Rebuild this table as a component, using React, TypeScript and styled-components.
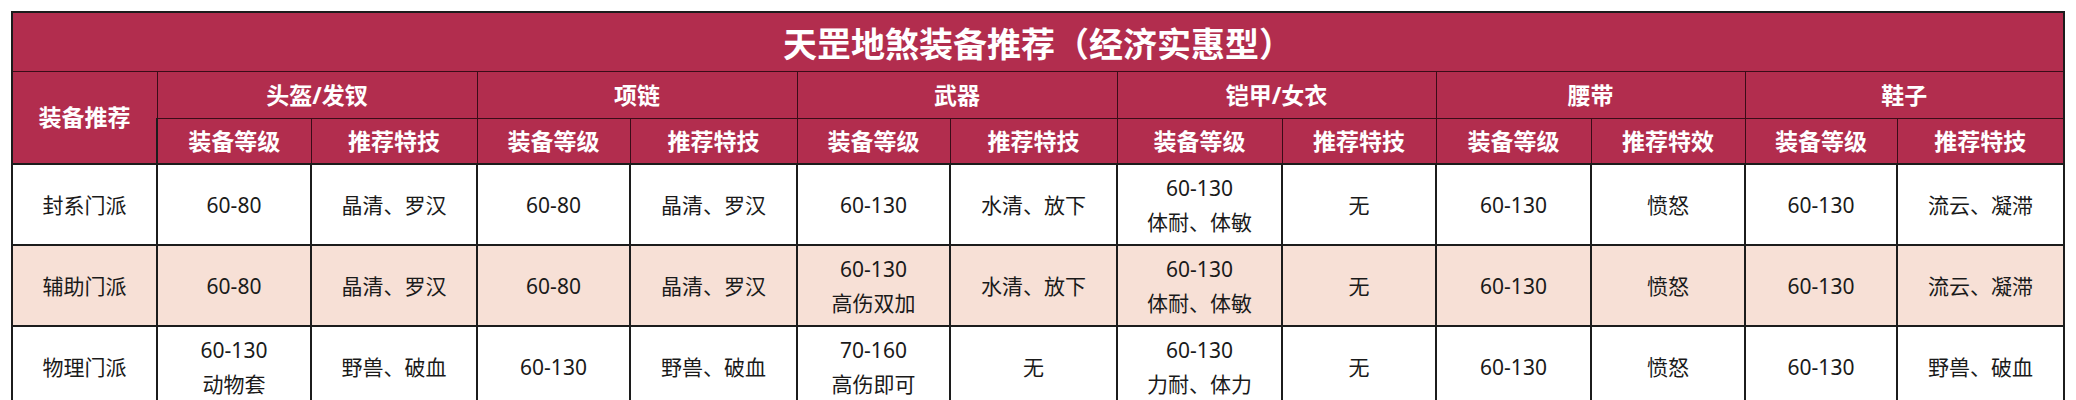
import React from "react";
import styled, { createGlobalStyle } from "styled-components";

const Global = createGlobalStyle`
  html, body {
    margin: 0;
    padding: 0;
    background: #ffffff;
  }
  body {
    font-family: "Noto Sans", "Noto Sans CJK SC", sans-serif;
  }
`;

const Page = styled.div`
  padding: 11px 0 0 11px;
`;

const Table = styled.table`
  border-collapse: collapse;
  table-layout: fixed;
  width: 2054px;
  font-family: "Noto Sans", "Noto Sans CJK SC", sans-serif;
`;

const TitleRow = styled.tr`
  height: 59px;
`;

const GroupRow = styled.tr`
  height: 47px;
`;

const SubRow = styled.tr`
  height: 46px;
`;

const BodyRow = styled.tr<{ $tint?: boolean }>`
  height: 81px;
  background: ${(p) => (p.$tint ? "#f7e0d6" : "#ffffff")};
`;

const TitleCell = styled.th`
  background: #b22d4e;
  color: #ffffff;
  font-family: "Noto Sans CJK SC", sans-serif;
  font-weight: 700;
  font-size: 34px;
  line-height: 40px;
  text-align: center;
  padding: 2px 0 0 0;
  border: 2px solid #1c1c1c;
  border-bottom: 1.5px solid #3a0c18;
  letter-spacing: 0;
`;

const HeadCell = styled.th`
  background: #b22d4e;
  color: #ffffff;
  font-family: "Noto Sans", "Noto Sans CJK SC", sans-serif;
  font-weight: 700;
  font-size: 23px;
  line-height: 30px;
  text-align: center;
  padding: 0;
  border: 1.5px solid #3a0c18;
  &:first-child {
    border-left: 2px solid #1c1c1c;
  }
  &:last-child {
    border-right: 2px solid #1c1c1c;
  }
`;

const Cell = styled.td`
  color: #1a1a1a;
  font-size: 21px;
  line-height: 34px;
  text-align: center;
  vertical-align: middle;
  padding: 0;
  border: 2px solid #1c1c1c;
  white-space: pre-line;
`;

const widths = [145, 154, 166, 153, 167, 153, 167, 165, 154, 155, 154, 152, 167];

const groups: { name: string; subs: [string, string] }[] = [
  { name: "头盔/发钗", subs: ["装备等级", "推荐特技"] },
  { name: "项链", subs: ["装备等级", "推荐特技"] },
  { name: "武器", subs: ["装备等级", "推荐特技"] },
  { name: "铠甲/女衣", subs: ["装备等级", "推荐特技"] },
  { name: "腰带", subs: ["装备等级", "推荐特效"] },
  { name: "鞋子", subs: ["装备等级", "推荐特技"] },
];

const rows: { name: string; tint?: boolean; cells: string[] }[] = [
  {
    name: "封系门派",
    cells: [
      "60-80",
      "晶清、罗汉",
      "60-80",
      "晶清、罗汉",
      "60-130",
      "水清、放下",
      "60-130\n体耐、体敏",
      "无",
      "60-130",
      "愤怒",
      "60-130",
      "流云、凝滞",
    ],
  },
  {
    name: "辅助门派",
    tint: true,
    cells: [
      "60-80",
      "晶清、罗汉",
      "60-80",
      "晶清、罗汉",
      "60-130\n高伤双加",
      "水清、放下",
      "60-130\n体耐、体敏",
      "无",
      "60-130",
      "愤怒",
      "60-130",
      "流云、凝滞",
    ],
  },
  {
    name: "物理门派",
    cells: [
      "60-130\n动物套",
      "野兽、破血",
      "60-130",
      "野兽、破血",
      "70-160\n高伤即可",
      "无",
      "60-130\n力耐、体力",
      "无",
      "60-130",
      "愤怒",
      "60-130",
      "野兽、破血",
    ],
  },
];

export default function App() {
  return (
    <Page>
      <Global />
      <Table>
        <colgroup>
          {widths.map((w, i) => (
            <col key={i} style={{ width: w }} />
          ))}
        </colgroup>
        <thead>
          <TitleRow>
            <TitleCell colSpan={13}>天罡地煞装备推荐（经济实惠型）</TitleCell>
          </TitleRow>
          <GroupRow>
            <HeadCell rowSpan={2}>装备推荐</HeadCell>
            {groups.map((g) => (
              <HeadCell key={g.name} colSpan={2}>
                {g.name}
              </HeadCell>
            ))}
          </GroupRow>
          <SubRow>
            {groups.flatMap((g) =>
              g.subs.map((s, i) => <HeadCell key={g.name + i}>{s}</HeadCell>)
            )}
          </SubRow>
        </thead>
        <tbody>
          {rows.map((r) => (
            <BodyRow key={r.name} $tint={r.tint}>
              <Cell>{r.name}</Cell>
              {r.cells.map((c, i) => (
                <Cell key={i}>{c}</Cell>
              ))}
            </BodyRow>
          ))}
        </tbody>
      </Table>
    </Page>
  );
}
